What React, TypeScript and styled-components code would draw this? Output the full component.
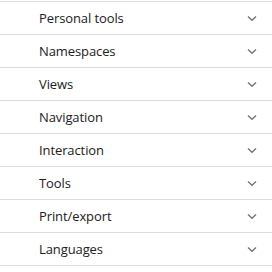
import { createGlobalStyle } from "styled-components";
import styled from "styled-components";

const sections = [
  "Personal tools",
  "Namespaces",
  "Views",
  "Navigation",
  "Interaction",
  "Tools",
  "Print/export",
  "Languages",
];

export default function App() {
  return (
    <>
      <GlobalStyle />
      <Menu>
        {sections.map((label) => (
          <Section key={label}>
            <Label>{label}</Label>
            <Chevron width="10" height="7" viewBox="0 0 10 7" aria-hidden>
              <path d="M1 1.5 L5 5.3 L9 1.5" />
            </Chevron>
          </Section>
        ))}
      </Menu>
    </>
  );
}

const GlobalStyle = createGlobalStyle`
  body {
    margin: 0;
    background: #fff;
    font-family: "Open Sans", "Noto Sans", sans-serif;
  }
`;

const Menu = styled.nav`
  margin-top: 1px;
  border-top: 1px solid #dadcdf;
`;

const Section = styled.div`
  display: flex;
  align-items: center;
  justify-content: space-between;
  height: 32px;
  padding: 0 15px 0 39px;
  border-bottom: 1px solid #dadcdf;
`;

const Label = styled.span`
  font-size: 13px;
  letter-spacing: -0.1px;
  color: #202122;
`;

const Chevron = styled.svg`
  fill: none;
  stroke: #72777d;
  stroke-width: 1.4;
`;
